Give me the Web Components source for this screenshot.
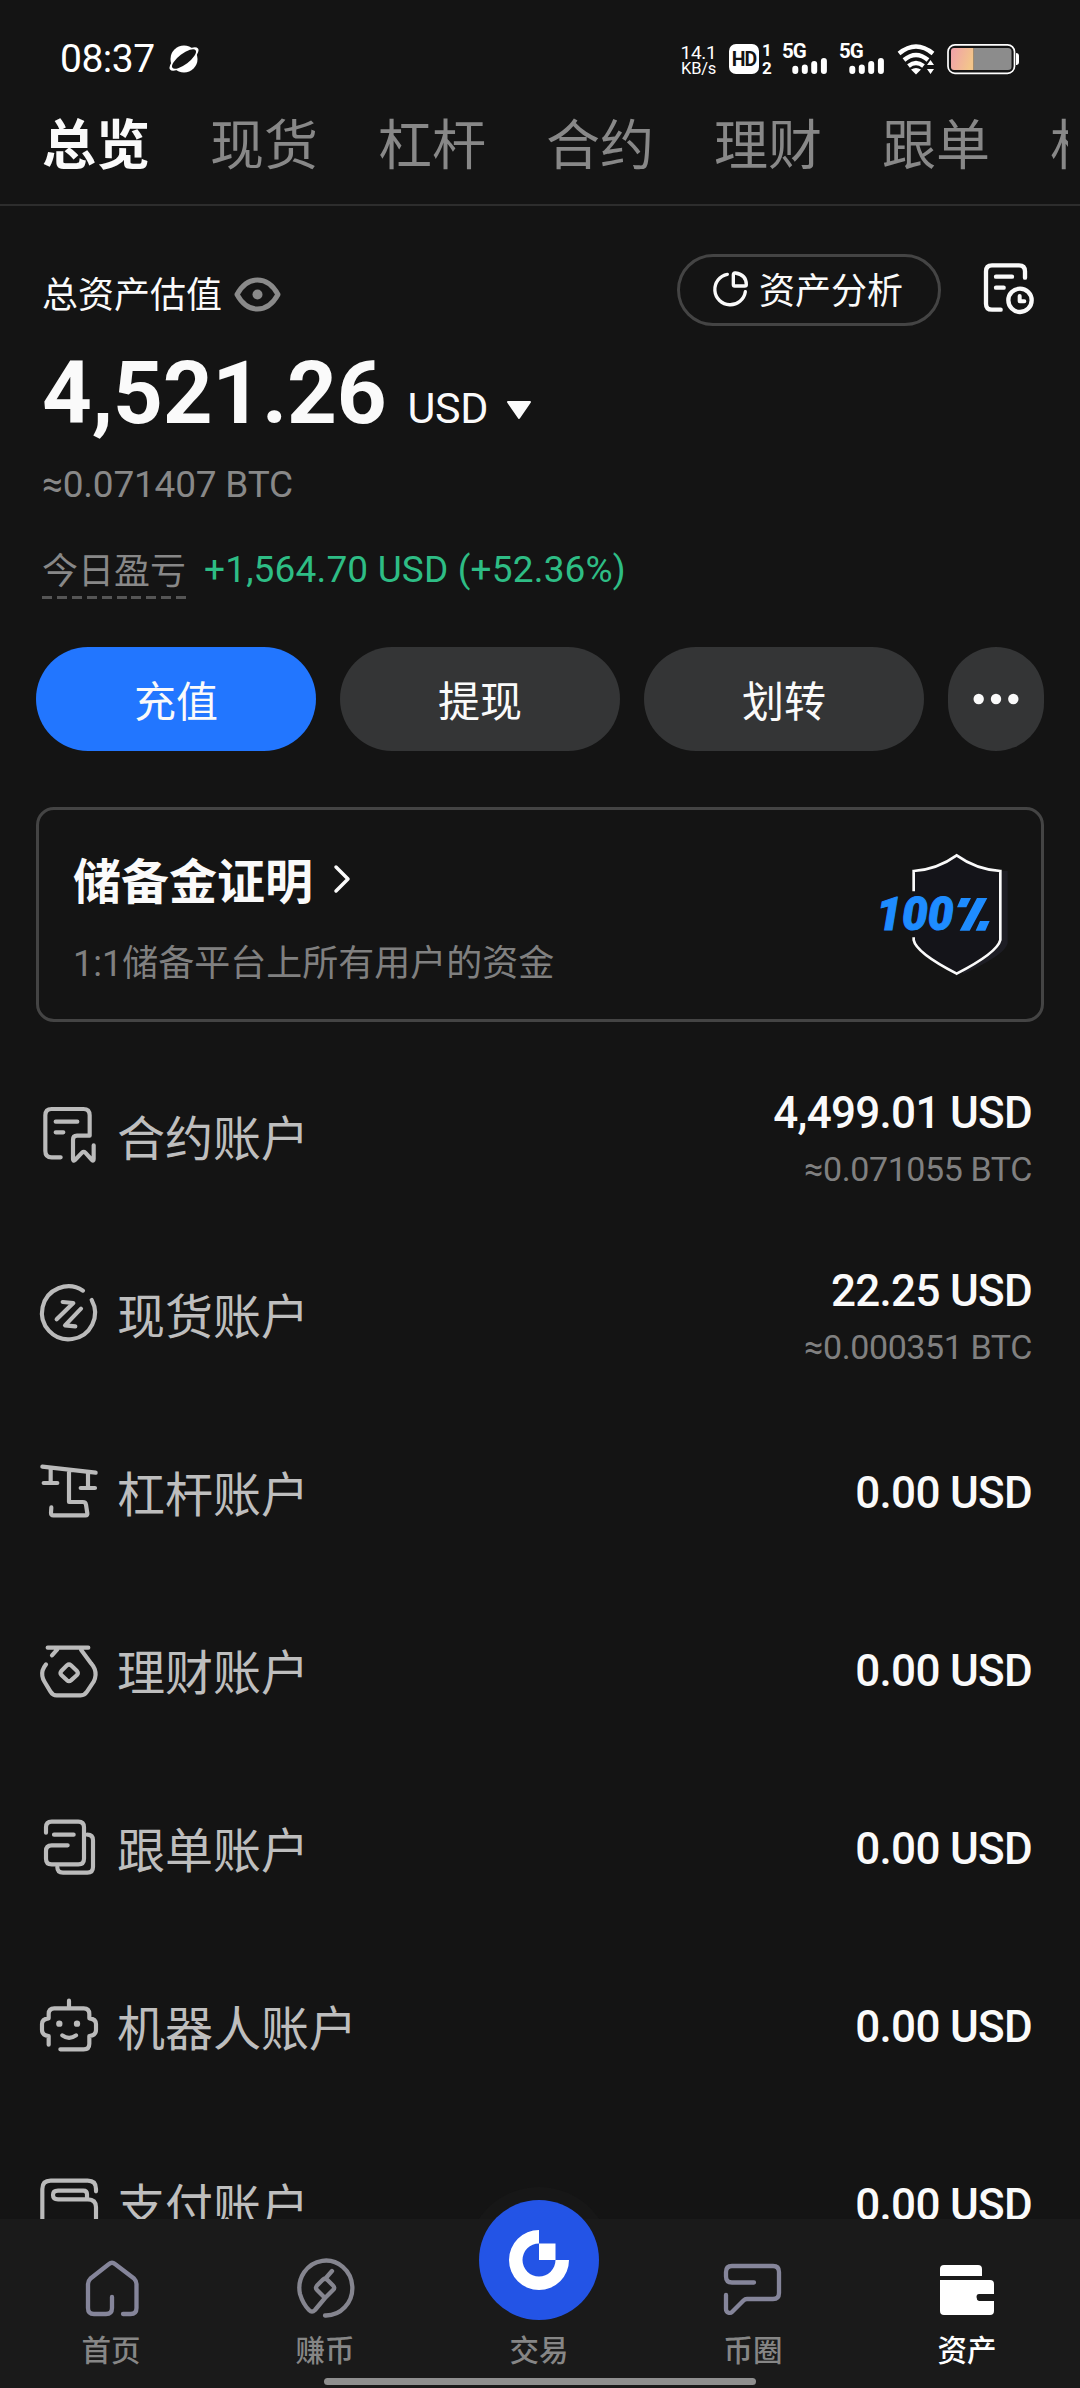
<!DOCTYPE html>
<html lang="zh-CN">
<head>
<meta charset="utf-8">
<title>资产总览</title>
<style>
html,body{margin:0;background:#141414}
body{width:1080px;height:2388px;overflow:hidden;color:#fff;font-family:Roboto,"Noto Sans CJK SC",sans-serif}
</style>
</head>
<body>
<wallet-app></wallet-app>
<script>
const define=(name,render)=>customElements.define(name,class extends HTMLElement{
  connectedCallback(){
    if(this.shadowRoot)return;
    this.attachShadow({mode:'open'}).innerHTML=render(this);
  }
});

const signal=`<svg width="45" height="32" viewBox="0 0 45 32"><g stroke="#fff" stroke-width="6" stroke-linecap="round"><path d="M12.3 25.800V28M21.800 24.500V28M31.200 21V28M40.900 18V28"/></g></svg>`;

define('status-bar',()=>`
<style>
:host{display:flex;box-sizing:border-box;height:88px;padding:30px 60px 0 60px;align-items:center;color:#fff}
.time{font-size:39px;line-height:58px;letter-spacing:-.5px;width:108px}
.spacer{flex:1}
.speed{font-size:19px;line-height:19px;text-align:center;width:37px;margin-right:12px;padding-top:1px;letter-spacing:-.3px}
.speed div{white-space:nowrap}
.speed .u{font-size:16.500px;line-height:14px}
svg{display:block}
.hd{display:flex;width:54px;align-items:center}
.hdb{width:30px;height:30px;border-radius:7px;background:#fff;color:#141414;font-size:19.500px;font-weight:700;line-height:31px;text-align:center;letter-spacing:-1px}
.sim{margin-left:3px;font-size:17px;line-height:18px;font-weight:700;width:13px}
.sig{width:57px;height:32px;display:grid}
.sig>*{grid-area:1/1}
.sig b{font-size:20.500px;line-height:17px;font-weight:700;letter-spacing:-1px;margin-left:-1px}
.wifi{margin-right:12px}
</style>
<span class="time">08:37</span>
<svg width="32" height="30" viewBox="0 0 32 30"><circle cx="16" cy="15" r="13.500" fill="#fff"/><g transform="rotate(-37 16 15)"><ellipse cx="16" cy="15" rx="17.500" ry="6.500" fill="#fff"/><ellipse cx="16" cy="15" rx="14.500" ry="5.300" fill="#141414"/></g></svg>
<div class="spacer"></div>
<div class="speed"><div>14.1</div><div class="u">KB/s</div></div>
<div class="hd"><div class="hdb">HD</div><div class="sim">1<br>2</div></div>
<div class="sig"><b>5G</b>${signal}</div>
<div class="sig"><b>5G</b>${signal}</div>
<svg class="wifi" width="38" height="32" viewBox="0 0 38 32"><g fill="none" stroke="#fff" stroke-width="4.300"><path d="M2 10.500Q19 -3.500 36 10.500"/><path d="M7 17Q19 7 31 17"/><path d="M11.500 23Q19 17 26.500 23"/></g><path d="M14 26.500q5-3 10 0l-5 5z" fill="#fff"/><path d="M30 22l3.500-5 3.500 5zM30 26l3.500 5 3.500-5z" fill="#fff"/></svg>
<svg width="73" height="32" viewBox="0 0 73 32"><defs><linearGradient id="g" y2=".3"><stop stop-color="#f0a0aa"/><stop offset="1" stop-color="#f3c58b"/></linearGradient></defs><rect x="1" y="1.800" width="66.500" height="28.500" rx="7" fill="none" stroke="#fff" stroke-width="1.700"/><path d="M26.500 5H61Q64.500 5 64.500 8.500V24Q64.500 27 61 27H26.500z" fill="#8c8c8c"/><path d="M7 5H26.500V27H7Q4 27 4 24V8Q4 5 7 5z" fill="url(#g)"/><path d="M69 10q3 0 3 3v6q0 3-3 3z" fill="#fff"/></svg>
`);

define('top-tabs',()=>`
<style>
:host{display:flex;box-sizing:border-box;height:118px;width:1080px;border-bottom:2px solid #2d2d2d}
nav{display:flex;gap:60px;padding-left:42px;width:1026px;overflow:hidden;font-size:54px;line-height:117px;color:#888;white-space:nowrap}
span{flex:none;width:108px}
.on{font-weight:700;color:#fafafa}
</style>
<nav><span class="on">总览</span><span>现货</span><span>杠杆</span><span>合约</span><span>理财</span><span>跟单</span><span>机器人</span></nav>
`);

define('asset-overview',()=>`
<style>
:host{display:block;padding:48px 36px 0 42px;color:#fafafa}
svg{display:block}
.head{display:flex;height:72px}
.label{display:flex;align-items:center;font-size:36px;height:72px;line-height:72px;padding-top:6px}
.label svg{margin:-4px 0 0 12px}
.analysis{margin-left:auto;box-sizing:border-box;width:264px;height:72px;border:3px solid #444;border-radius:36px;display:flex;align-items:center;padding-left:32px;font-size:36px;line-height:66px;gap:10px}
.analysis span{padding-top:4px}
.analysis svg{margin-top:-3px}
.hist{margin:6px 6px 0 40px}
.amount{display:flex;align-items:baseline;height:132px;line-height:134px}
.amount b{font-size:87px;font-weight:700;letter-spacing:-.2px}
.amount span{font-size:43px;margin-left:21px;letter-spacing:-.3px}
.amount svg{margin-left:18px;align-self:center;margin-top:35px}
.btc{font-size:37px;line-height:53px;height:51px;color:#888;letter-spacing:-.2px}
.pnl{display:flex;padding-top:38px;font-size:36px;line-height:51px;color:#888;height:52px}
.pnl div{width:144px}
.pnl i{display:block;height:3px;margin-top:-2px;background:repeating-linear-gradient(90deg,#555 0 10px,transparent 10px 14.900px)}
.pnl span{font-size:37px;line-height:46px;color:#2ebd85;margin-left:18px;letter-spacing:.17px}
</style>
<div class="head">
<div class="label">总资产估值<svg width="47" height="35" viewBox="0 0 47 35"><path d="M3 17.500Q11 3 23.500 3T44 17.500Q36 32 23.500 32T3 17.500z" fill="none" stroke="#8a8a8a" stroke-width="5" stroke-linejoin="round"/><circle cx="23.500" cy="17.500" r="5" fill="#8a8a8a"/></svg></div>
<div class="analysis"><svg width="37" height="38" viewBox="222 122 111 114"><g fill="none" stroke="#fafafa" stroke-width="10" stroke-linecap="round" stroke-linejoin="round"><path d="M268 135A46 46 0 1 0 322 187"/><path d="M286 136Q286 130 292 131Q325 136 325 166Q325 170 320 170H290Q286 170 286 166z"/></g></svg><span>资产分析</span></div>
<svg class="hist" width="57" height="58" viewBox="1029 90 171 174"><g fill="none" stroke="#fafafa" stroke-width="13" stroke-linecap="round" stroke-linejoin="round"><path d="M1088 239H1062Q1044 239 1044 221V124Q1044 106 1062 106H1143Q1161 106 1161 124V143"/><path d="M1074 140H1122M1074 173H1097"/><circle cx="1146" cy="211" r="35"/><path d="M1145 198V214H1159" stroke-width="12"/></g></svg>
</div>
<div class="amount"><b>4,521.26</b><span>USD</span><svg width="26" height="20" viewBox="0 0 26 20"><path d="M2 2H24L13 18z" fill="#fafafa" stroke="#fafafa" stroke-width="2" stroke-linejoin="round"/></svg></div>
<div class="btc">≈0.071407 BTC</div>
<div class="pnl"><div>今日盈亏<i></i></div><span>+1,564.70 USD (+52.36%)</span></div>
`);

define('action-button',()=>`
<style>
:host{display:block;width:280px;height:104px;border-radius:52px;background:#343536;font-size:42px;line-height:111px;text-align:center;color:#fafafa}
:host([primary]){background:#2276ff}
:host([round]){width:96px;display:flex;align-items:center;justify-content:center}
</style><slot></slot>`);

define('action-bar',()=>`
<style>:host{display:flex;gap:24px;padding:48px 36px 0}svg{display:block}</style>
<action-button primary>充值</action-button><action-button>提现</action-button><action-button>划转</action-button>
<action-button round><svg width="60" height="14" viewBox="-30 -7 60 14" fill="#fafafa"><circle cx="-17.300" r="5.200"/><circle r="5.200"/><circle cx="17.300" r="5.200"/></svg></action-button>`);

define('reserve-card',()=>`
<style>
:host{display:flex;justify-content:space-between;box-sizing:border-box;height:215px;margin:56px 36px 0;border:3px solid #444;border-radius:18px;padding:38px 30px 0 34px;color:#fafafa}
h2{margin:0;font-size:48px;line-height:70px;font-weight:700;display:flex;align-items:center}
h2 svg{margin:-8px 0 0 20px}
p{margin:11px 0 0;font-size:36px;line-height:70px;color:#808080}
svg{display:block}
.shield{margin-top:-2px;overflow:visible}
.pc{font:italic 900 136px Roboto,sans-serif;fill:#1e8cff;stroke:#1e8cff;stroke-width:3}
</style>
<div><h2>储备金证明<svg width="19" height="30" viewBox="0 0 19 30"><path d="M3 3L15 15L3 27" fill="none" stroke="#fafafa" stroke-width="3.500" stroke-linecap="round" stroke-linejoin="round"/></svg></h2><p>1:1储备平台上所有用户的资金</p></div>
<svg class="shield" width="136" height="130" viewBox="105 48 408 390" aria-label="100%"><path d="M242 122Q310 118 370 80Q420 120 503 123V340Q495 375 370 432z" fill="#1d1d24"/><path d="M350 75Q292 118 221 123V330Q228 368 350 431Q472 368 481 330V123Q408 118 350 75z" fill="#141419"/><path d="M221 184V123Q292 118 350 76Q408 118 481 123V330Q472 368 350 431Q228 368 221 330V322" fill="none" stroke="#fafafa" stroke-width="8"/>
<text class="pc" x="109" y="301" textLength="231" lengthAdjust="spacingAndGlyphs">100</text><path d="M363 204h30l-14 28h-28zM411 204h31l-53 98h-30zM420 273h29l-13 29h-29z" fill="#1e8cff"/></svg>`);

const icons={
contract:['102','<path d="M182 262H155Q136 262 136 243V136Q136 117 155 117H250Q269 117 269 136V197H231Q219 197 219 209V268Q219 275 225 270L246 248Q251 243 256 248L276 270Q281 275 281 267V226M167 155H232M167 187H190"/>'],
spot:['636','<path d="M249 662A79.500 79.500 0 1 0 275 690M188 696L220 699L170 748M243 716L195 766L226 769"/>'],
margin:['1170','<path d="M127 1190L287 1208M152 1195V1239M131 1239H172M264 1207V1254M242 1254H285M207 1200V1296H248Q257 1296 258 1304L262 1330Q263 1336 257 1336H160Q153 1336 153 1328L154 1312"/>'],
earn:['114','<path d="M143 143H265M172 148L156 166M138 193Q124 210 127 228Q128 236 134 246L151 274Q158 286 170 286H242Q254 286 261 275L281 245Q291 226 284 207Q281 199 274 191L243 149M201 196L184 213Q179 219 184 225L201 241Q207 246 213 241L231 225Q236 219 231 213L213 196Q207 191 201 196z"/>'],
copy:['648','<path d="M138 698V682Q138 665 155 665H235Q252 665 252 682V776Q252 793 235 793H155Q138 793 138 776V753Q138 736 155 736H203M162 704H221M262 704Q279 704 279 721V801Q279 818 262 818H189Q172 818 172 802"/>'],
bot:['1182','<path d="M207 1202V1222M146 1334V1308Q126 1306 126 1290V1272Q126 1257 146 1255V1242Q146 1225 163 1225H251Q268 1225 268 1242V1255Q288 1257 288 1272V1290Q288 1306 268 1308V1331Q268 1348 251 1348H181M187 1306Q207 1321 228 1306"/><g fill="#bbb" stroke="none"><circle cx="178" cy="1271" r="9.500"/><circle cx="231" cy="1271" r="9.500"/></g>'],
pay:['1716','<path d="M127 1940V1767Q127 1742 152 1742H263Q288 1742 288 1767V1774M288 1940V1822Q288 1798 263 1798H174Q159 1798 159 1785Q159 1772 174 1772H250Q261 1772 261 1783V1794"/>']
};

define('account-row',el=>{
const [y,d]=icons[el.getAttribute('icon')],btc=el.getAttribute('btc');
return `<style>
:host{display:flex;align-items:center;height:178px;padding:0 48px 0 39px}
svg{display:block;overflow:visible}
.name{font-size:48px;line-height:64px;margin:3px 0 0 18px;color:#bebebe;flex:1;white-space:nowrap}
.val{display:flex;flex-direction:column;align-items:flex-end}
b{font-size:44px;line-height:54px;font-weight:500;letter-spacing:-.7px;color:#fafafa;margin-top:-2px}
:host([btc]) b{margin-top:4px}
small{font-size:34px;line-height:54px;color:#808080;letter-spacing:-.4px;margin-top:2px;margin-bottom:-1px}
</style>
<svg width="60" height="68" viewBox="117 ${y} 180 204" fill="none" stroke="#bbb" stroke-width="12.500" stroke-linecap="round" stroke-linejoin="round">${d}</svg>
<div class="name"><slot></slot></div>
<div class="val"><b>${el.getAttribute('usd')} USD</b>${btc?`<small>≈${btc} BTC</small>`:''}</div>`});

define('account-list',()=>`
<style>:host{display:block;margin-top:27px;height:1170px;overflow:hidden}</style>
<account-row icon="contract" usd="4,499.01" btc="0.071055">合约账户</account-row>
<account-row icon="spot" usd="22.25" btc="0.000351">现货账户</account-row>
<account-row icon="margin" usd="0.00">杠杆账户</account-row>
<account-row icon="earn" usd="0.00">理财账户</account-row>
<account-row icon="copy" usd="0.00">跟单账户</account-row>
<account-row icon="bot" usd="0.00">机器人账户</account-row>
<account-row icon="pay" usd="0.00">支付账户</account-row>`);

define('nav-item',()=>`
<style>
:host{display:flex;flex-direction:column;align-items:center;width:214px;color:#868686;font-size:29.500px;line-height:40px;font-weight:500}
:host([active]){color:#fff}
.i{height:112px;display:flex;align-items:flex-end;justify-content:center}
</style><div class="i"><slot name="icon"></slot></div><slot></slot>`);

define('bottom-nav',()=>`
<style>
:host{display:block;position:relative;height:169px;background:#1a1a1a}
.items{display:flex;padding-left:4px}
nav-item svg{display:block;margin-bottom:13px}
nav-item svg.low{margin-bottom:14px}
nav-item svg.trade{margin-bottom:11px;overflow:visible}
.bar{width:432px;height:7px;border-radius:4px;background:#8f8f8f;margin:7px 0 0 324px}
</style>
<div class="items">
<nav-item><svg slot="icon" width="60" height="64" viewBox="0 0 60 64" fill="none" stroke="#85859a" stroke-width="4.300" stroke-linecap="round" stroke-linejoin="round"><path d="M31 43V54Q31 60 25 60H13Q7 60 7 54V30Q7 27 9.500 24.500L28 10Q31 7.500 34 10L53 24.500Q55.500 27 55.500 30V54Q55.500 60 49.500 60H42"/></svg>首页</nav-item>
<nav-item><svg slot="icon" width="60" height="64" viewBox="0 0 60 64" fill="none" stroke="#85858f" stroke-width="4.300" stroke-linecap="round" stroke-linejoin="round"><path d="M30 61.500A26.500 27.500 0 1 0 5 40Q8 50 14 56Q17 59 20 56L30 44L38 36Q40.500 34 38 31.500L32 25.500Q30 23.500 28 25.500L22 31.500Q20 34 22 36L30 44M30 25L37 17"/></svg>赚币</nav-item>
<nav-item><svg slot="icon" class="trade" width="120" height="120" viewBox="-60 -60 120 120"><circle r="73" fill="#171717"/><path d="M-74 -41H74V74H-74z" fill="#1a1a1a"/><circle r="60" fill="#2354e6"/><path d="M0 -30A30 30 0 1 0 30 0H16.500V-16.500H0zM0 -16.500A16.500 16.500 0 1 0 16.500 0H0z" fill="#fff" fill-rule="evenodd"/></svg>交易</nav-item>
<nav-item><svg slot="icon" class="low" width="62" height="64" viewBox="0 0 62 64" fill="none" stroke="#85859a" stroke-width="4.300" stroke-linecap="round" stroke-linejoin="round"><path d="M32 29.500H10Q4 29.500 4 23.500V19Q4 13 10 13H51Q57 13 57 19V40Q57 46 51 46H25Q23 46 21.500 47.500L10 59Q8.500 60.500 6 59.500Q4 58.500 4 56V42"/></svg>币圈</nav-item>
<nav-item active><svg slot="icon" class="low" width="60" height="64" viewBox="0 0 60 64" fill="#fff"><path d="M7 12H41Q45 12 45 16V23H3V16Q3 12 7 12zM3 27H53Q57 27 57 31V41H42Q39.500 41 39.500 44T42 48H57V58Q57 62 53 62H7Q3 62 3 58z"/></svg>资产</nav-item>
</div>
<div class="bar"></div>`);

define('wallet-app',()=>`
<style>:host{display:block;width:1080px;height:2388px;background:#141414;overflow:hidden}</style>
<status-bar></status-bar><top-tabs></top-tabs><asset-overview></asset-overview><action-bar></action-bar><reserve-card></reserve-card><account-list></account-list><bottom-nav></bottom-nav>`);
</script>
</body>
</html>
